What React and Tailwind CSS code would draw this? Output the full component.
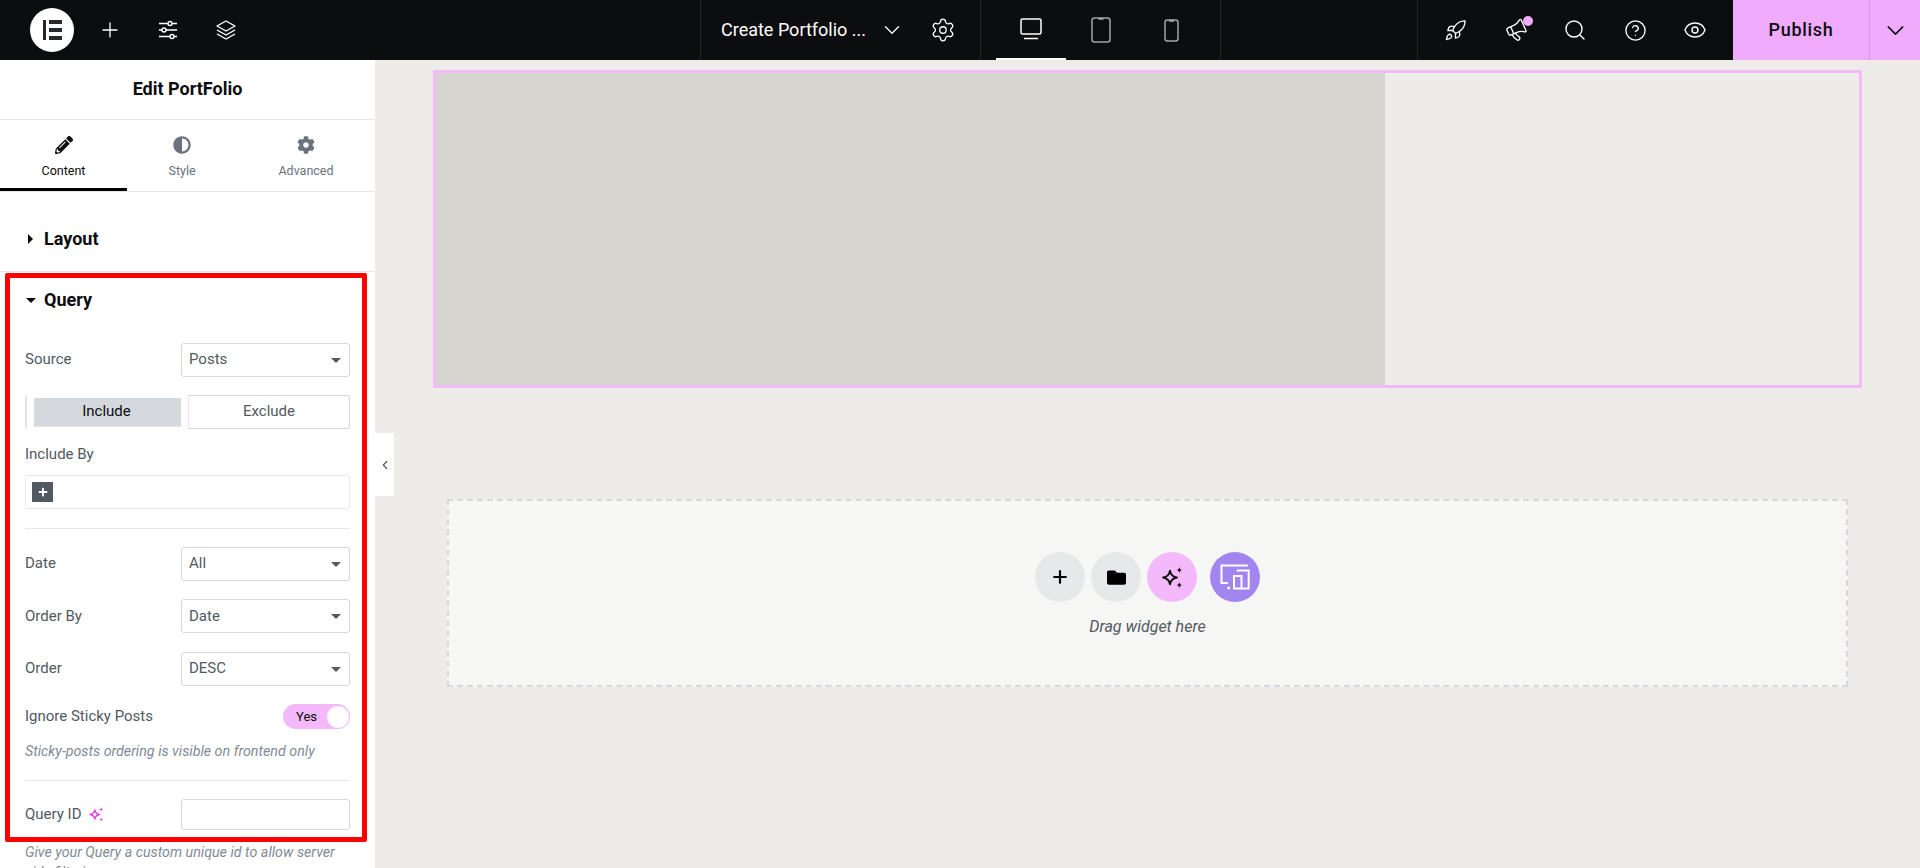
import { ChevronDown, ChevronLeft, CircleHelp, Eye, Plus, Rocket, Megaphone, Search, Settings } from "lucide-react";
import { FaAdjust, FaCog, FaFolder, FaPencilAlt, FaPlus } from "react-icons/fa";

function ElementorLogo() {
  return (
    <div className="w-[44px] h-[44px] rounded-full bg-white flex items-center justify-center">
      <svg width="19" height="20" viewBox="0 0 19 20" fill="#26292c">
        <rect x="0" y="0" width="3" height="20" />
        <rect x="6" y="0" width="13" height="4" />
        <rect x="6" y="8" width="13" height="4" />
        <rect x="6" y="16" width="13" height="4" />
      </svg>
    </div>
  );
}

function SlidersIcon() {
  return (
    <svg width="20" height="20" viewBox="0 0 20 20" fill="none" stroke="white" strokeWidth="1.4">
      <path d="M1 3.5h9M14 3.5h5M1 10h3M8 10h11M1 16.5h11M16 16.5h3" />
      <circle cx="12" cy="3.5" r="2" />
      <circle cx="6" cy="10" r="2" />
      <circle cx="14" cy="16.5" r="2" />
    </svg>
  );
}

function LayersIcon() {
  return (
    <svg width="20" height="20" viewBox="0 0 20 20" fill="none" stroke="white" strokeWidth="1.4" strokeLinejoin="round">
      <path d="M10 1 L19 6 L10 11 L1 6 Z" />
      <path d="M1 10 L10 15 L19 10" />
      <path d="M1 14 L10 19 L19 14" />
    </svg>
  );
}

function DesktopIcon() {
  return (
    <svg width="22" height="22" viewBox="0 0 22 22" fill="none" stroke="white" strokeWidth="1.5">
      <rect x="1" y="1" width="20" height="15" rx="1.5" />
      <path d="M4 20.5h14" />
    </svg>
  );
}

function TabletIcon() {
  return (
    <svg width="20" height="26" viewBox="0 0 20 26" fill="none" stroke="#9da5ae" strokeWidth="1.5">
      <rect x="1" y="1" width="18" height="24" rx="2.5" />
      <path d="M7.5 1.8h5" strokeWidth="2" />
    </svg>
  );
}

function MobileIcon() {
  return (
    <svg width="15" height="23" viewBox="0 0 15 23" fill="none" stroke="#9da5ae" strokeWidth="1.5">
      <rect x="1" y="1" width="13" height="21" rx="2.5" />
      <path d="M5 1.8h5" strokeWidth="2" />
    </svg>
  );
}

function SparkleIcon({ color, size }) {
  return (
    <svg width={size} height={size} viewBox="0 0 20 20" fill="none">
      <path d="M8 4.5 C8.6 8 10 9.4 13.5 10 C10 10.6 8.6 12 8 15.5 C7.4 12 6 10.6 2.5 10 C6 9.4 7.4 8 8 4.5 Z" stroke={color} strokeWidth="1.5" strokeLinejoin="round" />
      <path d="M15.5 1.5 C15.8 3.2 16.3 3.7 18 4 C16.3 4.3 15.8 4.8 15.5 6.5 C15.2 4.8 14.7 4.3 13 4 C14.7 3.7 15.2 3.2 15.5 1.5 Z" fill={color} />
      <path d="M15.5 13.5 C15.8 15.2 16.3 15.7 18 16 C16.3 16.3 15.8 16.8 15.5 18.5 C15.2 16.8 14.7 16.3 13 16 C14.7 15.7 15.2 15.2 15.5 13.5 Z" fill={color} />
    </svg>
  );
}

function ResponsiveIcon() {
  return (
    <svg width="32" height="32" viewBox="0 0 32 32" fill="none" stroke="white" strokeWidth="2">
      <path d="M28.7 4.5H2.5v17.5h6.5" />
      <rect x="15" y="15" width="7.5" height="12.5" />
      <path d="M17.7 9.5h12v18h-7" />
      <path d="M8.5 27h2.5" strokeWidth="2.5" />
    </svg>
  );
}

function SelectRow({ label, value, className, shift = "-mt-[2px]" }) {
  return (
    <div className={`flex items-center justify-between h-[34px] ${className}`}>
      <span className={shift}>{label}</span>
      <div className="w-[169px] h-full border border-[#d5d8dc] rounded-[3px] pl-[7px] pr-[8px] flex items-center justify-between">
        <span className={shift}>{value}</span>
        <span className="w-0 h-0 border-x-[5px] border-x-transparent border-t-[5px] border-t-[#515962]" />
      </div>
    </div>
  );
}

function TabItem({ icon, label, active, className }) {
  return (
    <div className={`flex flex-col items-center pt-[16px] h-full ${className} ${active ? "border-b-[3px] border-black text-[#0c0d0e]" : "text-[#69727d]"}`}>
      <span className="h-[18px] text-[18px] flex items-center">{icon}</span>
      <span className="mt-[8px] text-[12.5px] leading-[18px]">{label}</span>
    </div>
  );
}

function TopBar() {
  return (
    <div className="h-[60px] shrink-0 bg-[#0c0d0e] flex text-white">
      <div className="w-[700px] flex items-center pl-[30px]">
        <ElementorLogo />
        <div className="ml-[7px] w-[58px] flex justify-center">
          <Plus size={24} strokeWidth={1.3} />
        </div>
        <div className="w-[58px] flex justify-center">
          <SlidersIcon />
        </div>
        <div className="w-[58px] flex justify-center">
          <LayersIcon />
        </div>
      </div>
      <div className="w-[280px] border-l border-[#26292c] flex items-center pl-[20px]">
        <span className="w-[142px] text-[18px] whitespace-nowrap -mt-[2px]">Create Portfolio ...</span>
        <ChevronDown className="ml-[16px]" size={26} strokeWidth={1.2} />
        <Settings className="ml-[25px]" size={26} strokeWidth={1.2} />
      </div>
      <div className="w-[241px] border-x border-[#26292c] flex pl-[15px]">
        <div className="w-[70px] flex items-center justify-center border-b-2 border-white">
          <DesktopIcon />
        </div>
        <div className="w-[70px] flex items-center justify-center">
          <TabletIcon />
        </div>
        <div className="w-[70px] flex items-center justify-center">
          <MobileIcon />
        </div>
      </div>
      <div className="flex-1" />
      <div className="w-[316px] border-l border-[#26292c] flex items-center pl-[7px]">
        <div className="w-[60px] flex justify-center">
          <Rocket size={23} strokeWidth={1.4} />
        </div>
        <div className="w-[60px] flex justify-center relative">
          <Megaphone className="-rotate-[24deg] ml-[2px]" size={23} strokeWidth={1.4} />
          <span className="absolute left-[38px] -top-[3px] w-[10px] h-[10px] rounded-full bg-[#f0abfc]" />
        </div>
        <div className="w-[60px] flex justify-center">
          <Search size={24} strokeWidth={1.4} />
        </div>
        <div className="w-[60px] flex justify-center">
          <CircleHelp size={23} strokeWidth={1.4} />
        </div>
        <div className="w-[60px] flex justify-center">
          <Eye size={24} strokeWidth={1.4} />
        </div>
      </div>
      <div className="w-[136px] bg-[#f0abfc] flex items-center justify-center text-[#0c0d0e] text-[18px] font-medium tracking-[0.7px]">
        <span className="-mt-[2px]">Publish</span>
      </div>
      <div className="w-[51px] bg-[#f0abfc] border-l border-[#e58cf3] flex items-center justify-center text-[#0c0d0e]">
        <ChevronDown size={29} strokeWidth={1.2} />
      </div>
    </div>
  );
}

function Panel() {
  return (
    <div className="w-[375px] shrink-0 bg-white relative z-10 text-[15px] text-[#515962]">
      <div className="h-[60px] border-b border-[#e6e8ea] flex items-center justify-center text-[18px] font-bold text-[#0c0d0e]">
        <span className="-mt-[2px]">Edit PortFolio</span>
      </div>
      <div className="h-[72px] border-b border-[#e6e8ea] flex">
        <TabItem icon={<FaPencilAlt />} label="Content" active className="w-[127px]" />
        <TabItem icon={<FaAdjust />} label="Style" className="w-[110px]" />
        <TabItem icon={<FaCog />} label="Advanced" className="w-[138px]" />
      </div>
      <div className="h-[80px] border-b border-[#e6e8ea] pt-[35px] pl-[28px] flex items-start">
        <span className="mt-[7px] w-0 h-0 border-y-[5px] border-y-transparent border-l-[5px] border-l-[#0c0d0e]" />
        <span className="ml-[11px] text-[18px] leading-[24px] font-bold text-[#0c0d0e]">Layout</span>
      </div>
      <div className="px-[25px]">
        <div className="pt-[16px] flex items-center">
          <span className="w-0 h-0 border-x-[5px] border-x-transparent border-t-[5px] border-t-[#0c0d0e] ml-[1px]" />
          <span className="ml-[8px] text-[18px] leading-[24px] font-bold text-[#0c0d0e]">Query</span>
        </div>
        <SelectRow label="Source" value="Posts" className="mt-[31px]" />
        <div className="mt-[18px] h-[34px] flex">
          <div className="w-[163px] h-full flex border-l-2 border-[#eddfe1] rounded-l-[3px] pl-[7px] items-center">
            <div className="w-[147px] h-[29px] bg-[#d5d8dc] border-b border-[#f5dde0] flex items-center justify-center text-[#0c0d0e] pr-[2px]">
              Include
            </div>
          </div>
          <div className="flex-1 border border-[#d5d8dc] border-l-[#f5dde0] rounded-r-[3px] flex items-center justify-center">
            <span className="-mt-[2px]">Exclude</span>
          </div>
        </div>
        <div className="mt-[15px] leading-[20px]">Include By</div>
        <div className="mt-[11px] h-[34px] border border-[#e6e8ea] rounded-[3px] pl-[6px] flex items-center">
          <div className="w-[21px] h-[20px] bg-[#515962] flex items-center justify-center text-white text-[10px]">
            <FaPlus />
          </div>
        </div>
        <div className="mt-[19px] h-px bg-[#e6e8ea]" />
        <SelectRow label="Date" value="All" className="mt-[18px]" />
        <SelectRow label="Order By" value="Date" className="mt-[18px]" shift="mt-0" />
        <SelectRow label="Order" value="DESC" className="mt-[19px]" />
        <div className="mt-[18px] h-[25px] flex items-center justify-between">
          <span className="-mt-[1px]">Ignore Sticky Posts</span>
          <div className="w-[67px] h-[25px] rounded-full bg-[#f3b9fb] flex items-center justify-between pl-[13px] text-[13px] text-[#0c0d0e]">
            Yes
            <span className="w-[24px] h-[24px] rounded-full bg-white border border-[#f3b9fb]" />
          </div>
        </div>
        <div className="mt-[12px] leading-[20px] text-[14.25px] italic text-[#818a96]">
          Sticky-posts ordering is visible on frontend only
        </div>
        <div className="mt-[19px] h-px bg-[#e6e8ea]" />
        <div className="mt-[18px] h-[31px] flex items-center justify-between">
          <span className="flex items-center gap-[6px]">
            Query ID
            <SparkleIcon color="#e633e8" size={17} />
          </span>
          <div className="w-[169px] h-full border border-[#d5d8dc] rounded-[3px]" />
        </div>
        <div className="mt-[12px] leading-[20px] text-[14.25px] italic text-[#818a96]">
          Give your Query a custom unique id to allow server side filtering.
        </div>
      </div>
      {/* red annotation drawn on top of the screenshot */}
      <div className="absolute left-[5px] top-[213px] w-[362px] h-[569px] border-[5px] border-[#ff0000] rounded-[2px] pointer-events-none" />
      {/* collapse handle */}
      <div className="absolute left-[375px] top-[373px] w-[19px] h-[63px] bg-white flex items-center justify-center text-[#515962]">
        <ChevronLeft size={14} strokeWidth={2} />
      </div>
    </div>
  );
}

function Canvas() {
  return (
    <div className="flex-1 bg-[#edece8] pt-[10px] pl-[58px] pr-[58px]">
      <div className="h-[318px] border-[3px] border-[#f3b9fb] flex">
        <div className="w-[949px] bg-[#d5d4cf]" />
      </div>
      <div className="mt-[111px] mx-[14px] h-[188px] bg-[#f6f6f4] border-2 border-dashed border-[#d5d8dc] flex flex-col items-center pt-[51px]">
        <div className="flex items-center">
          <div className="w-[50px] h-[50px] rounded-full bg-[#e6e8ea] flex items-center justify-center text-black">
            <Plus size={20} strokeWidth={2.6} />
          </div>
          <div className="ml-[6px] w-[50px] h-[50px] rounded-full bg-[#e6e8ea] flex items-center justify-center text-black text-[19px]">
            <FaFolder />
          </div>
          <div className="ml-[6px] w-[50px] h-[50px] rounded-full bg-[#f3b9fb] flex items-center justify-center">
            <SparkleIcon color="#0c0d0e" size={25} />
          </div>
          <div className="ml-[13px] w-[50px] h-[50px] rounded-full bg-[#a385f0] flex items-center justify-center">
            <ResponsiveIcon />
          </div>
        </div>
        <div className="mt-[14px] text-[16px] leading-[22px] italic text-[#515962]">Drag widget here</div>
      </div>
    </div>
  );
}

export default function App() {
  return (
    <div className="h-[868px] overflow-hidden flex flex-col font-['Roboto',sans-serif]">
      <TopBar />
      <div className="flex-1 flex min-h-0">
        <Panel />
        <Canvas />
      </div>
    </div>
  );
}
